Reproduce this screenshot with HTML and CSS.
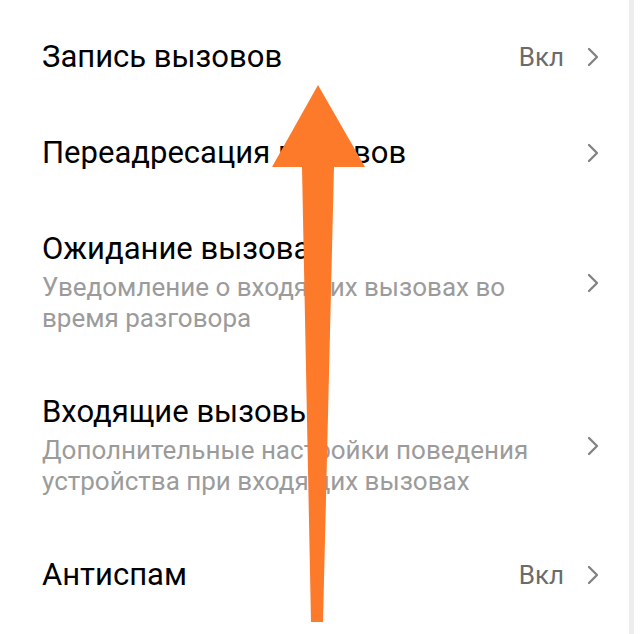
FILE: index.html
```html
<!DOCTYPE html>
<html lang="ru">
<head>
<meta charset="utf-8">
<link rel="stylesheet" href="styles.css">
</head>
<body>
<div class="screen">
  <div class="list">
    <div class="row">
      <div class="text"><div class="title">Запись вызовов</div></div>
      <div class="value">Вкл</div>
      <svg class="chev" viewBox="0 0 12 20"><polyline points="2,2 10,10 2,18"/></svg>
    </div>
    <div class="row">
      <div class="text"><div class="title">Переадресация вызовов</div></div>
      <svg class="chev" viewBox="0 0 12 20"><polyline points="2,2 10,10 2,18"/></svg>
    </div>
    <div class="row">
      <div class="text">
        <div class="title">Ожидание вызова</div>
        <div class="sub">Уведомление о входящих вызовах во время разговора</div>
      </div>
      <svg class="chev" viewBox="0 0 12 20"><polyline points="2,2 10,10 2,18"/></svg>
    </div>
    <div class="row">
      <div class="text">
        <div class="title">Входящие вызовы</div>
        <div class="sub">Дополнительные настройки поведения устройства при входящих вызовах</div>
      </div>
      <svg class="chev" viewBox="0 0 12 20"><polyline points="2,2 10,10 2,18"/></svg>
    </div>
    <div class="row">
      <div class="text"><div class="title">Антиспам</div></div>
      <div class="value">Вкл</div>
      <svg class="chev" viewBox="0 0 12 20"><polyline points="2,2 10,10 2,18"/></svg>
    </div>
  </div>
  <div class="scrollbar"></div>
  <svg class="arrow" viewBox="0 0 640 634" width="640" height="634">
    <polygon points="318,85 365,167 334,167 323,622 311,622 302,167 272,167"/>
  </svg>
</div>
</body>
</html>
```
FILE: styles.css
```css
html, body {
  margin: 0;
  padding: 0;
  background: #ffffff;
}
.screen {
  position: relative;
  width: 640px;
  height: 634px;
  overflow: hidden;
  display: flex;
  font-family: Roboto, "Noto Sans", sans-serif;
}
.list {
  width: 629px;
  padding-top: 9px;
  display: flex;
  flex-direction: column;
}
.scrollbar {
  width: 5px;
  background: #ededed;
}
.row {
  display: flex;
  align-items: center;
  padding: 30px 0 30px 42px;
}
.text {
  flex: 1;
}
.title {
  font-size: 31px;
  line-height: 36px;
  color: #000000;
}
.sub {
  margin-top: 5px;
  font-size: 26px;
  line-height: 31px;
  color: #9b9b9b;
  max-width: 492px;
}
.value {
  font-size: 26px;
  color: #6b6b6b;
  margin-right: 23px;
}
.chev {
  width: 12px;
  height: 20px;
  margin-right: 30px;
  fill: none;
  stroke: #828282;
  stroke-width: 2.3;
  stroke-linecap: round;
  stroke-linejoin: round;
}
.arrow {
  position: absolute;
  left: 0;
  top: 0;
  fill: #fd7a2a;
}
```
